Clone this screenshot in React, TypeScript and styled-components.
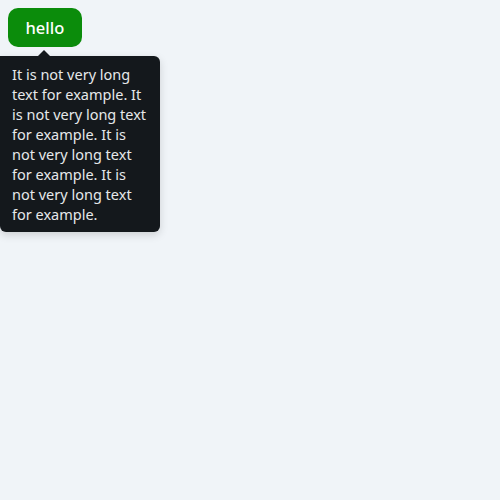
import React from "react";
import styled, { createGlobalStyle } from "styled-components";

const Global = createGlobalStyle`
  html, body { margin: 0; padding: 0; background: #f0f4f8; }
  body { font-family: "Noto Sans", "DejaVu Sans", sans-serif; }
`;

const Page = styled.div`
  position: relative;
  width: 500px;
  height: 500px;
  background: #f0f4f8;
  padding: 8px;
  box-sizing: border-box;
`;

const Button = styled.button`
  height: 39px;
  padding: 0 17.5px;
  border: none;
  border-radius: 10px;
  background: #0b8c0b;
  color: #ffffff;
  font-family: "Noto Sans", sans-serif;
  font-size: 16.5px;
  font-weight: 500;
  cursor: pointer;
`;

const Tooltip = styled.div`
  position: absolute;
  left: 0;
  top: 56px;
  width: 160px;
  box-sizing: border-box;
  padding: 8px 12px 8px 12px;
  background: #14181c;
  color: #e6e8ea;
  border-radius: 0 6px 6px 6px;
  font-family: "Noto Sans", sans-serif;
  font-size: 14.5px;
  line-height: 20px;
  box-shadow: 0 3px 8px rgba(0, 0, 0, 0.15);
`;

const Arrow = styled.div`
  position: absolute;
  left: 38px;
  top: -6px;
  width: 0;
  height: 0;
  border-left: 6px solid transparent;
  border-right: 6px solid transparent;
  border-bottom: 6px solid #14181c;
`;

export default function App() {
  return (
    <Page>
      <Global />
      <Button>hello</Button>
      <Tooltip>
        <Arrow />
        It is not very long text for example. It is not very long text for
        example. It is not very long text for example. It is not very long text
        for example.
      </Tooltip>
    </Page>
  );
}
